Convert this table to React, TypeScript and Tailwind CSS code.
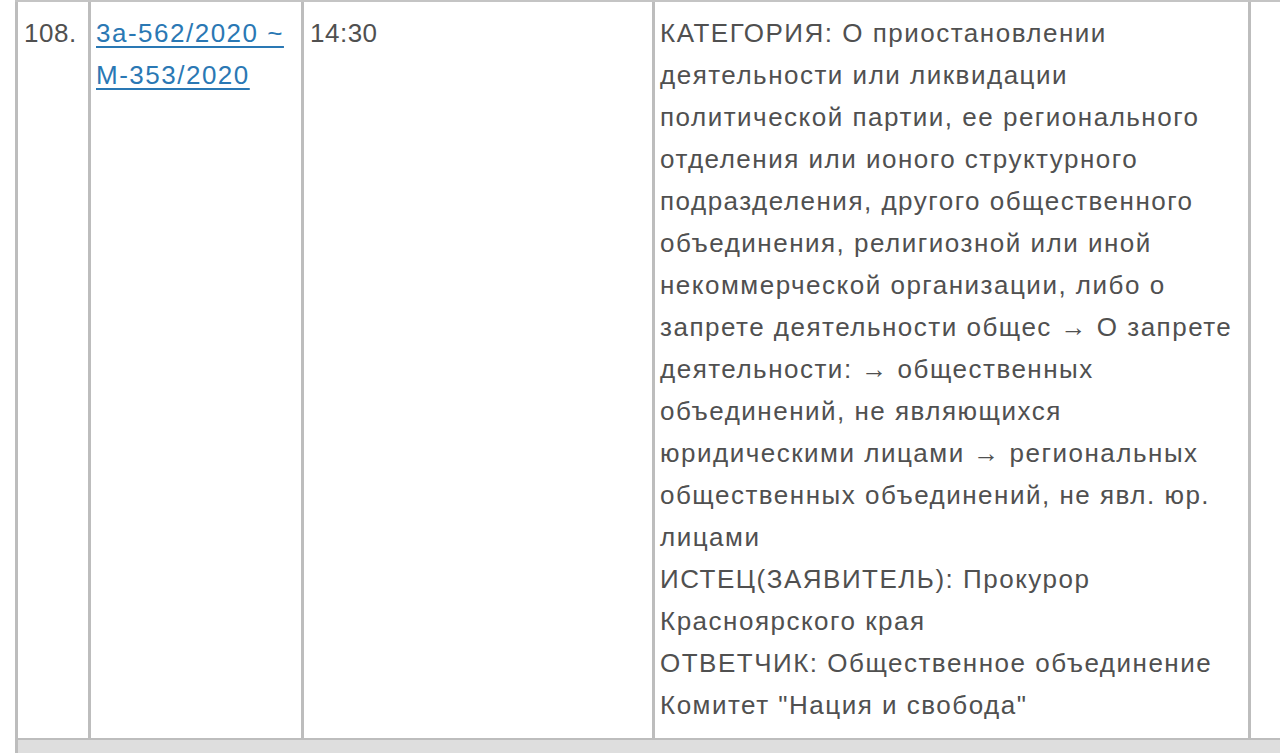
import React from "react";

const lines = [
  "КАТЕГОРИЯ: О приостановлении",
  "деятельности или ликвидации",
  "политической партии, ее регионального",
  "отделения или ионого структурного",
  "подразделения, другого общественного",
  "объединения, религиозной или иной",
  "некоммерческой организации, либо о",
  "запрете деятельности общес → О запрете",
  "деятельности: → общественных",
  "объединений, не являющихся",
  "юридическими лицами → региональных",
  "общественных объединений, не явл. юр.",
  "лицами",
  "ИСТЕЦ(ЗАЯВИТЕЛЬ): Прокурор",
  "Красноярского края",
  "ОТВЕТЧИК: Общественное объединение",
  'Комитет "Нация и свобода"',
];

export default function App() {
  return (
    <div
      className="w-[1280px] h-[753px] overflow-hidden bg-white text-[#505050] text-[26px] leading-[42px] tracking-[1.5px]"
      style={{ fontFamily: "'Liberation Sans', Arial, sans-serif" }}
    >
      <div className="ml-[15px] border-t-2 border-[#c4c4c4] flex flex-col">
        <div className="flex border-b-[2px] border-[#bdbdbd]">
          <div className="w-[73px] shrink-0 border-l-[3px] border-[#bdbdbd] pl-[6px] pt-[10px] pb-[12px] tracking-[0.5px]">
            108.
          </div>
          <div className="w-[213px] shrink-0 border-l-[3px] border-[#bdbdbd] pl-[5px] pt-[10px]">
            <a href="#" className="text-[#2a78b4] underline decoration-[2px] underline-offset-[4px]">
              3а-562/2020 ~<br />М-353/2020
            </a>
          </div>
          <div className="w-[351px] shrink-0 border-l-[3px] border-[#bdbdbd] pl-[6px] pt-[10px] tracking-[0.5px]">
            14:30
          </div>
          <div className="w-[596px] shrink-0 border-l-[3px] border-[#bdbdbd] pl-[5px] pt-[10px] pb-[12px]">
            {lines.map((l, i) => (
              <div key={i} className="whitespace-nowrap">
                {l}
              </div>
            ))}
          </div>
          <div className="flex-1 border-l-[3px] border-[#bdbdbd]" />
        </div>
        <div className="h-[20px] bg-[#dedede] border-l-[3px] border-[#bdbdbd]" />
      </div>
    </div>
  );
}
